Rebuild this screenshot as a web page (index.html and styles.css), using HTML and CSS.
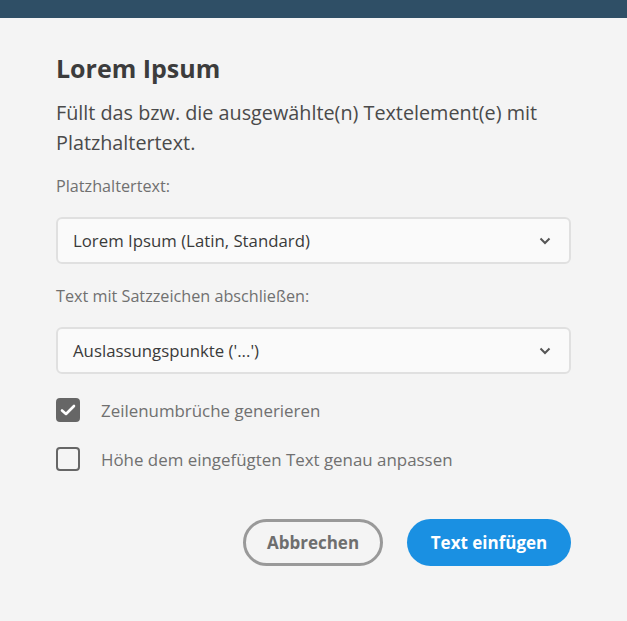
FILE: index.html
```html
<!DOCTYPE html>
<html lang="de">
<head>
<meta charset="utf-8">
<link rel="stylesheet" href="styles.css">
</head>
<body>
<div class="topbar"></div>
<main class="dialog">
  <h1 class="title">Lorem Ipsum</h1>
  <p class="desc">Füllt das bzw. die ausgewählte(n) Textelement(e) mit Platzhaltertext.</p>
  <div class="field">
    <div class="label">Platzhaltertext:</div>
    <div class="select"><span>Lorem Ipsum (Latin, Standard)</span>
      <svg class="chev" width="12" height="8" viewBox="0 0 12 8"><path d="M1.5 1.5 L6 6 L10.5 1.5" fill="none" stroke="#555" stroke-width="2"/></svg>
    </div>
  </div>
  <div class="field">
    <div class="label">Text mit Satzzeichen abschließen:</div>
    <div class="select"><span>Auslassungspunkte ('...')</span>
      <svg class="chev" width="12" height="8" viewBox="0 0 12 8"><path d="M1.5 1.5 L6 6 L10.5 1.5" fill="none" stroke="#555" stroke-width="2"/></svg>
    </div>
  </div>
  <div class="checks">
    <div class="check"><span class="box checked"><svg width="16" height="14" viewBox="0 0 16 14"><path d="M2 7.5 L6 11 L14 3" fill="none" stroke="#fff" stroke-width="2.6" stroke-linecap="round" stroke-linejoin="round"/></svg></span><span class="ctext">Zeilenumbrüche generieren</span></div>
    <div class="check"><span class="box"></span><span class="ctext">Höhe dem eingefügten Text genau anpassen</span></div>
  </div>
  <div class="buttons">
    <button class="btn secondary">Abbrechen</button>
    <button class="btn primary">Text einfügen</button>
  </div>
</main>
</body>
</html>
```
FILE: styles.css
```css
html, body {
  margin: 0;
  padding: 0;
  background: #f4f4f4;
  font-family: "Open Sans", "Noto Sans", sans-serif;
}
.topbar {
  height: 18px;
  background: #2f4f66;
}
.dialog {
  padding: 34px 56px 0 56px;
  width: 515px;
}
.title {
  margin: 0;
  font-size: 25px;
  font-weight: 700;
  color: #3c3c3c;
  line-height: 32px;
}
.desc {
  margin: 14px 0 0 0;
  font-size: 19.8px;
  line-height: 30px;
  color: #4a4a4a;
}
.field {
  margin-top: 17px;
}
.field + .field {
  margin-top: 21px;
}
.label {
  font-size: 16.2px;
  color: #707070;
  line-height: 22px;
}
.select {
  margin-top: 20px;
  height: 47px;
  box-sizing: border-box;
  border: 2px solid #e0e0e0;
  border-radius: 6px;
  background: #fafafa;
  display: flex;
  align-items: center;
  justify-content: space-between;
  padding: 0 18px 0 15px;
  font-size: 16.8px;
  color: #3a3a3a;
}
.chev { display: block; }
.checks {
  margin-top: 24px;
  display: flex;
  flex-direction: column;
  gap: 25px;
}
.check {
  display: flex;
  align-items: center;
  gap: 21px;
  height: 24px;
}
.box {
  width: 24px;
  height: 24px;
  box-sizing: border-box;
  border: 2.5px solid #666;
  border-radius: 4px;
  display: flex;
  align-items: center;
  justify-content: center;
}
.box.checked {
  background: #666;
}
.ctext {
  font-size: 16.9px;
  color: #707070;
}
.buttons {
  margin-top: 48px;
  display: flex;
  justify-content: flex-end;
  gap: 24px;
}
.btn {
  height: 47px;
  border-radius: 24px;
  font-family: "Open Sans", "Noto Sans", sans-serif;
  font-size: 17px;
  font-weight: 700;
  box-sizing: border-box;
  padding: 0;
}
.btn.secondary {
  width: 140px;
  background: transparent;
  border: 3px solid #999;
  color: #6e6e6e;
}
.btn.primary {
  width: 164px;
  background: #1a90e2;
  border: none;
  color: #fff;
}
```
